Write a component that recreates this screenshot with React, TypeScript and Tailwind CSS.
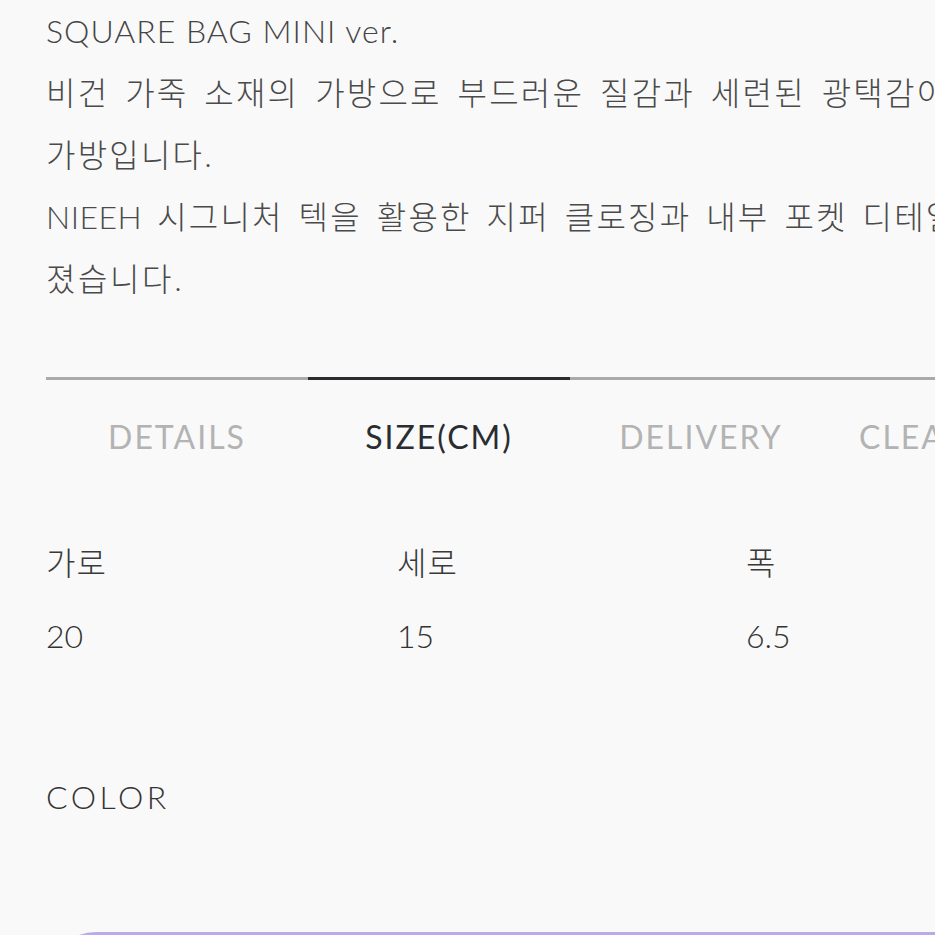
const latin = '[font-family:Lato,"Noto_Sans_CJK_KR",sans-serif]'

const tabs = ['DETAILS', 'SIZE(CM)', 'DELIVERY', 'CLEANING']

const sizes = [
  { label: '가로', value: '20' },
  { label: '세로', value: '15' },
  { label: '폭', value: '6.5' },
]

export default function App() {
  const active = 1
  return (
    <div className={`w-[935px] h-[935px] overflow-hidden bg-[#f9f9f9] ${latin}`}>
      <div className="pl-[46px] w-[1400px]">
        {/* Description */}
        <div className="text-[32px] leading-[62px] font-light text-[#444] whitespace-nowrap">
          <p className="tracking-[1px]">SQUARE BAG MINI ver.</p>
          <p className="tracking-[2.2px] [word-spacing:5px] text-[#4a4a4a]">비건 가죽 소재의 가방으로 부드러운 질감과 세련된 광택감이 돋보이는</p>
          <p className="tracking-[2.2px] text-[#4a4a4a]">가방입니다.</p>
          <p className="tracking-[2.2px] [word-spacing:4px] text-[#4a4a4a]">
            <span className="tracking-[0.5px]">NIEEH</span> 시그니처 텍을 활용한 지퍼 클로징과 내부 포켓 디테일이 더해
          </p>
          <p className="tracking-[2.6px] text-[#4a4a4a]">졌습니다.</p>
        </div>

        {/* Tabs */}
        <div className="mt-[67px] flex">
          {tabs.map((t, i) => (
            <div
              key={t}
              className={`w-[262px] shrink-0 h-[117px] flex items-center border-t-[3px] text-[32px] tracking-[2px] whitespace-nowrap ${
                i === active ? 'border-[#2a2c30] text-[#2a2c30]' : 'border-[#aaaaaa] text-[#b3b3b3]'
              } ${i === 3 ? 'justify-start pl-[27px]' : 'justify-center'}`}
            >
              {t}
            </div>
          ))}
        </div>

        {/* Size table */}
        <div className="mt-[32px] grid grid-cols-[351px_349px_350px] text-[32px] leading-[73px] font-light text-[#333]">
          {sizes.map(s => (
            <div key={s.label} className="tracking-[1px] text-[#3a3a3a]">{s.label}</div>
          ))}
          {sizes.map(s => (
            <div key={s.label + 'v'}>{s.value}</div>
          ))}
        </div>

        {/* Color */}
        <p className="mt-[101px] text-[32px] leading-[48px] font-light text-[#333] tracking-[3.5px]">COLOR</p>
        <div className="mt-[111px] w-[1000px] h-[100px] rounded-[50px] bg-[#bcaae6]" />
      </div>
    </div>
  )
}
